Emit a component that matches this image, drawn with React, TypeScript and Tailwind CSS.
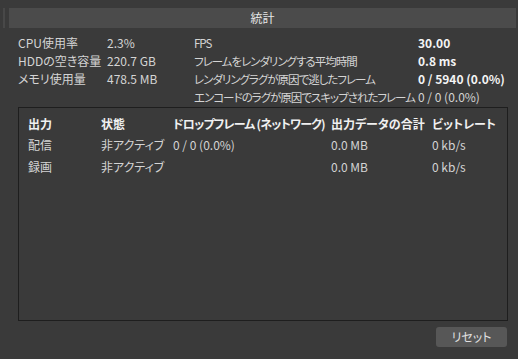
const font = "font-['Noto_Sans_CJK_JP','Noto_Sans',sans-serif] [font-feature-settings:'palt']";

const stats = [
  { label: "CPU使用率", value: "2.3%", name: "FPS", stat: "30.00", bold: true },
  { label: "HDDの空き容量", value: "220.7 GB", name: "フレームをレンダリングする平均時間", stat: "0.8 ms", bold: true },
  { label: "メモリ使用量", value: "478.5 MB", name: "レンダリングラグが原因で逃したフレーム", stat: "0 / 5940 (0.0%)", bold: true },
  { label: "", value: "", name: "エンコードのラグが原因でスキップされたフレーム", stat: "0 / 0 (0.0%)", bold: false },
];

const outputs = [
  { name: "配信", state: "非アクティブ", dropped: "0 / 0 (0.0%)", total: "0.0 MB", bitrate: "0 kb/s" },
  { name: "録画", state: "非アクティブ", dropped: "", total: "0.0 MB", bitrate: "0 kb/s" },
];

export default function App() {
  return (
    <div className={`w-[518px] h-[359px] overflow-hidden bg-[#3a3a3a] pt-2 text-[12px] text-[#d4d4d4] ${font}`}>
      {/* title bar */}
      <div className="flex h-5">
        <div className="ml-[3px] w-[2px] bg-[#484848]" />
        <div className="ml-[4px] w-[507px] bg-[#4b4b4b] flex items-center justify-center text-[#e6e6e6]">
          統計
        </div>
      </div>

      {/* stats */}
      <div className="mt-[6px] pl-[18px] grid grid-cols-[89px_87px_224px_1fr] leading-[18px] whitespace-nowrap">
        {stats.map((s, i) => (
          <div key={i} className="contents">
            <div>{s.label}</div>
            <div>{s.value}</div>
            <div className="text-[11.5px] tracking-[-1px]">{s.name}</div>
            <div className={s.bold ? "font-bold text-[#f4f4f4]" : ""}>{s.stat}</div>
          </div>
        ))}
      </div>

      {/* outputs table */}
      <div className="ml-[18px] mt-[1px] w-[490px] h-[214px] border border-[#1e1e1e] bg-[#3a3a3a] pl-[9px] pt-[6px] whitespace-nowrap">
        <div className="grid grid-cols-[73px_72px_158px_101px_1fr] leading-[20px] font-bold text-[#f0f0f0]">
          <div>出力</div>
          <div>状態</div>
          <div className="tracking-[-0.8px]">ドロップフレーム (ネットワーク)</div>
          <div>出力データの合計</div>
          <div>ビットレート</div>
        </div>
        {outputs.map((o) => (
          <div key={o.name} className="grid grid-cols-[73px_72px_158px_101px_1fr] leading-[22px]">
            <div>{o.name}</div>
            <div>{o.state}</div>
            <div>{o.dropped}</div>
            <div>{o.total}</div>
            <div>{o.bitrate}</div>
          </div>
        ))}
      </div>

      {/* footer */}
      <div className="flex justify-end pr-[11px] mt-[6px]">
        <button
          type="button"
          className="w-[71px] h-5 rounded-[3px] bg-[#575757] text-[#e0e0e0] leading-none"
        >
          リセット
        </button>
      </div>
    </div>
  );
}
